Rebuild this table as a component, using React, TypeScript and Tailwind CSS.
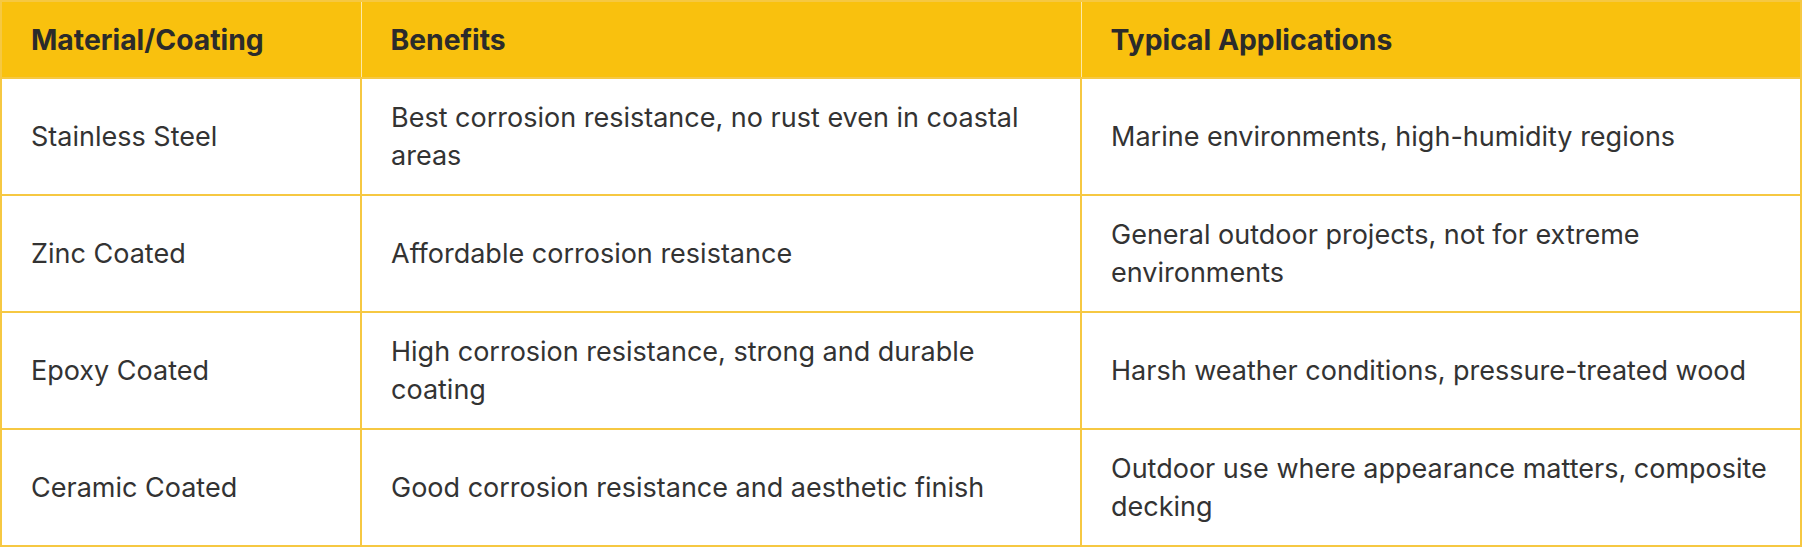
import React from 'react';

// Material / coating comparison table
const rows = [
  {
    material: 'Stainless Steel',
    benefits: 'Best corrosion resistance, no rust even in coastal areas',
    uses: 'Marine environments, high-humidity regions',
  },
  {
    material: 'Zinc Coated',
    benefits: 'Affordable corrosion resistance',
    uses: 'General outdoor projects, not for extreme environments',
  },
  {
    material: 'Epoxy Coated',
    benefits: 'High corrosion resistance, strong and durable coating',
    uses: 'Harsh weather conditions, pressure-treated wood',
  },
  {
    material: 'Ceramic Coated',
    benefits: 'Good corrosion resistance and aesthetic finish',
    uses: 'Outdoor use where appearance matters, composite decking',
  },
];

export default function App() {
  return (
    <div className="w-[1802px] h-[547px] bg-white font-['Inter',_'Liberation_Sans',_sans-serif]">
      <table className="w-full table-fixed border-collapse border-2 border-[#f6c842]">
        <colgroup>
          <col className="w-[20%]" />
          <col className="w-[40%]" />
          <col className="w-[40%]" />
        </colgroup>
        <thead>
          <tr className="bg-[#f9c10e] text-left text-[28.3px] leading-[38px] font-bold text-[#2b2b2b]">
            <th className="h-[77px] px-[29px] py-0 border-r border-[#fde8a6] font-bold">Material/Coating</th>
            <th className="h-[77px] px-[29px] py-0 border-r border-[#fde8a6] font-bold">Benefits</th>
            <th className="h-[77px] px-[29px] py-0 font-bold">Typical Applications</th>
          </tr>
        </thead>
        <tbody className="text-[27px] leading-[38px] text-[#333333]">
          {rows.map((r) => (
            <tr key={r.material} className="h-[117px] border-t-2 border-[#f6c842]">
              <td className="px-[29px] py-[18px] border-r-2 border-[#f6c842] align-middle">{r.material}</td>
              <td className="px-[29px] py-[18px] border-r-2 border-[#f6c842] align-middle">{r.benefits}</td>
              <td className="px-[29px] py-[18px] align-middle">{r.uses}</td>
            </tr>
          ))}
        </tbody>
      </table>
    </div>
  );
}
